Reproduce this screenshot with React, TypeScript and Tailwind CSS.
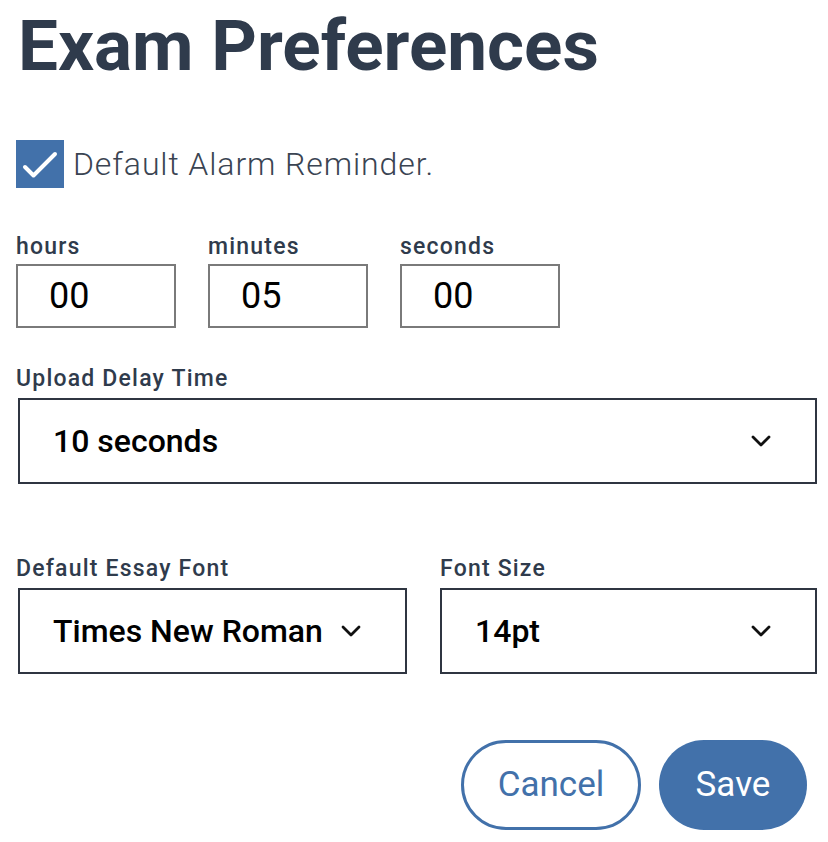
import React from "react";

const Chevron: React.FC = () => (
    <svg className="w-[20px] h-[12px] shrink-0" viewBox="0 0 20 12" fill="none" stroke="#111" strokeWidth="2.8" strokeLinecap="round" strokeLinejoin="round">
        <path d="M2 2l8 8 8-8" />
    </svg>
);

const FieldLabel: React.FC<{ children: React.ReactNode }> = ({ children }) => (
    <label className="block h-[28px] text-[23px] leading-[30px] font-medium tracking-[1.2px] text-[#2f3b4c]">{children}</label>
);

const TimeField: React.FC<{ label: string; value: string }> = ({ label, value }) => (
    <div className="flex flex-col gap-[4px]">
        <FieldLabel>{label}</FieldLabel>
        <div className="w-[160px] h-[64px] border-2 border-[#7a7a7a] flex items-center pl-[31px] text-[36px] text-black">
            {value}
        </div>
    </div>
);

const SelectBox: React.FC<{ value: string; className?: string }> = ({ value, className }) => (
    <div className={`h-[86px] border-2 border-[#2f3541] flex items-center justify-between pl-[33px] pr-[44px] ${className ?? ""}`}>
        <span className="text-[32px] font-medium text-black">{value}</span>
        <Chevron />
    </div>
);

const App: React.FC = () => {
    return (
        <div className="min-h-screen bg-white pl-[16px] pr-[11px]" style={{ fontFamily: "Roboto, 'Liberation Sans', sans-serif" }}>
            {/* Title */}
            <h1 className="pt-[10px] pl-[2px] text-[71px] leading-[72px] font-bold text-[#2f3b4c]">Exam Preferences</h1>

            {/* Alarm reminder checkbox */}
            <div className="mt-[58px] flex items-center gap-[9px]">
                <div className="w-[48px] h-[48px] bg-[#4271aa]">
                    <svg className="w-[48px] h-[48px]" viewBox="0 0 48 48" fill="none" stroke="white" strokeWidth="4" strokeLinecap="round" strokeLinejoin="round">
                        <path d="M9 27l8.5 8.5L39 14" />
                    </svg>
                </div>
                <span className="text-[32px] font-light tracking-[0.9px] text-[#3a4452]">Default Alarm Reminder.</span>
            </div>

            {/* Time inputs */}
            <div className="mt-[44px] flex gap-[32px]">
                <TimeField label="hours" value="00" />
                <TimeField label="minutes" value="05" />
                <TimeField label="seconds" value="00" />
            </div>

            {/* Upload delay */}
            <div className="mt-[36px] flex flex-col gap-[6px]">
                <FieldLabel>Upload Delay Time</FieldLabel>
                <SelectBox value="10 seconds" className="ml-[2px]" />
            </div>

            {/* Essay font + size */}
            <div className="mt-[70px] flex gap-[33px]">
                <div className="w-[391px] flex flex-col gap-[6px]">
                    <FieldLabel>Default Essay Font</FieldLabel>
                    <SelectBox value="Times New Roman" className="ml-[2px]" />
                </div>
                <div className="flex-1 flex flex-col gap-[6px]">
                    <FieldLabel>Font Size</FieldLabel>
                    <SelectBox value="14pt" />
                </div>
            </div>

            {/* Actions */}
            <div className="mt-[66px] flex justify-end gap-[18px] pr-[10px]">
                <button className="w-[180px] h-[90px] rounded-full border-[3px] border-[#4271aa] text-[#4271aa] text-[35px] bg-white">Cancel</button>
                <button className="w-[148px] h-[90px] rounded-full bg-[#4271aa] text-white text-[35px]">Save</button>
            </div>
        </div>
    );
};

export default App;
